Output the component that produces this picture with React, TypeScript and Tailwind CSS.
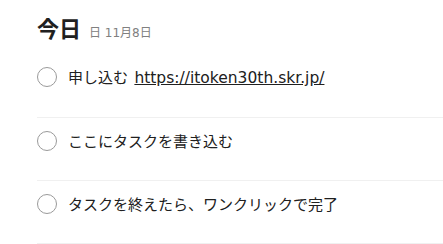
const tasks = [
  { id: 1, text: '申し込む', link: 'https://itoken30th.skr.jp/' },
  { id: 2, text: 'ここにタスクを書き込む' },
  { id: 3, text: 'タスクを終えたら、ワンクリックで完了' },
]

const App = () => {
  return (
    <div className="min-h-screen bg-white pl-[37px] font-['Noto_Sans_CJK_JP',sans-serif] text-[#202020]">
      <div className="flex items-baseline pt-[12px] mb-[12px]">
        <h1 className="text-[22px] leading-[30px] font-bold">今日</h1>
        <span className="ml-[8px] text-[12px] text-[#808080] font-['DejaVu_Sans','Noto_Sans_CJK_JP',sans-serif]">日 11月8日</span>
      </div>
      <ul>
        {tasks.map((task) => (
          <li key={task.id} className="flex items-start pt-[13px] pb-[29px] border-b border-[#f0f0f0]">
            <span className="w-5 h-5 shrink-0 rounded-full border border-[#9a9a9a]" />
            <span className="ml-[11px] text-[15px] leading-[20px]">
              {task.text}
              {task.link && (
                <>
                  {' '}
                  <a href={task.link} className="ml-[3px] underline text-[15.5px] leading-[20px] font-['DejaVu_Sans',sans-serif]">
                    {task.link}
                  </a>
                </>
              )}
            </span>
          </li>
        ))}
      </ul>
    </div>
  )
}

export default App
